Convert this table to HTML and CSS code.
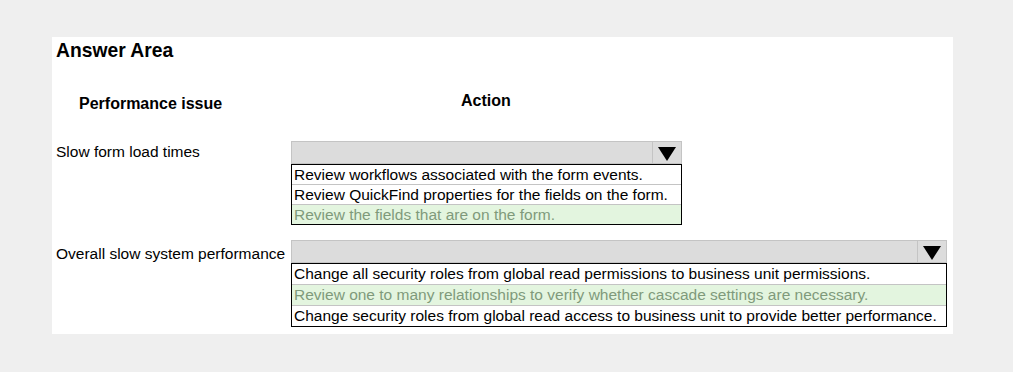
FILE: index.html
```html
<!DOCTYPE html>
<html lang="en">
<head>
    <meta charset="UTF-8">
    <title>Answer Area</title>
    <link rel="stylesheet" href="styles.css">
</head>
<body>
<div class="answer-area">
    <h1>Answer Area</h1>
    <div class="headings">
        <div class="heading-issue">Performance issue</div>
        <div class="heading-action">Action</div>
    </div>

    <div class="question">
        <div class="issue">Slow form load times</div>
        <div class="dropdown small">
            <div class="dropdown-head">
                <span class="arrow"></span>
            </div>
            <ul class="options">
                <li>Review workflows associated with the form events.</li>
                <li>Review QuickFind properties for the fields on the form.</li>
                <li class="selected">Review the fields that are on the form.</li>
            </ul>
        </div>
    </div>

    <div class="question second">
        <div class="issue">Overall slow system performance</div>
        <div class="dropdown wide">
            <div class="dropdown-head">
                <span class="arrow"></span>
            </div>
            <ul class="options">
                <li>Change all security roles from global read permissions to business unit permissions.</li>
                <li class="selected">Review one to many relationships to verify whether cascade settings are necessary.</li>
                <li>Change security roles from global read access to business unit to provide better performance.</li>
            </ul>
        </div>
    </div>
</div>
</body>
</html>
```

FILE: styles.css
```css
body {
    margin: 0;
    background-color: #efefef;
    font-family: "Liberation Sans", Arial, sans-serif;
    color: #000;
}

.answer-area {
    margin: 37px 0 0 52px;
    width: 901px;
    height: 297px;
    box-sizing: border-box;
    padding: 3px 0 0 4px;
    background-color: #fff;
}

h1 {
    margin: 0;
    font-size: 19.3px;
    line-height: 22px;
}

.headings {
    display: flex;
    margin-top: 30px;
    font-weight: bold;
    font-size: 16px;
}

.heading-issue {
    width: 200px;
    padding: 3px 0 0 23px;
}

.heading-action {
    margin-left: 182px;
}

.question {
    display: flex;
    align-items: flex-start;
    margin-top: 28px;
    font-size: 15.5px;
}

.question.second {
    margin-top: 15px;
}

.issue {
    width: 235px;
    padding-top: 2px;
}

.second .issue {
    padding-top: 5px;
}

.dropdown-head {
    display: flex;
    justify-content: flex-end;
    height: 21px;
    border: 1px solid #c4c4c4;
    background-color: #dcdcdc;
}

.arrow {
    width: 28px;
    border-left: 1px solid #c4c4c4;
    position: relative;
}

.arrow::after {
    content: "";
    position: absolute;
    left: 5px;
    top: 5px;
    border-left: 9px solid transparent;
    border-right: 9px solid transparent;
    border-top: 14px solid #000;
}

.options {
    list-style: none;
    margin: 0;
    padding: 0;
    border: 1px solid #000;
}

.options li {
    height: 19px;
    line-height: 19px;
    padding-left: 2px;
    border-bottom: 1px solid #c4c4c4;
    white-space: nowrap;
}

.options li:last-child {
    border-bottom: none;
}

.options li.selected {
    background-color: #e3f5df;
    color: #7f9a7b;
}

.small {
    width: 391px;
}

.wide {
    width: 656px;
}

.wide .options li {
    height: 20px;
    line-height: 20px;
}
```
